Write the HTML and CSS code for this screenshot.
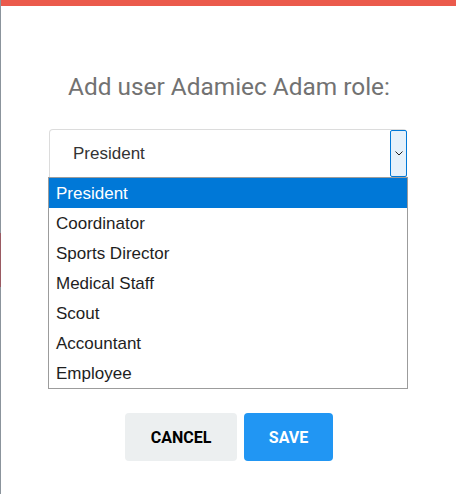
FILE: index.html
```html
<!DOCTYPE html>
<html>
<head>
<meta charset="utf-8">
<link rel="stylesheet" href="styles.css">
</head>
<body>
<div class="frame">
  <div class="side">
    <div class="side-grey"></div>
    <div class="side-red"></div>
    <div class="side-grey side-fill"></div>
  </div>
  <div class="main">
    <div class="topbar"></div>
    <div class="content">
      <h1 class="title">Add user Adamiec Adam role:</h1>
      <div class="picker">
        <div class="select">
          <span class="select-value">President</span>
          <span class="select-arrow">
            <svg width="8" height="5" viewBox="0 0 8 5"><path d="M0.5 0.5 L4 4 L7.5 0.5" fill="none" stroke="#222" stroke-width="1"/></svg>
          </span>
        </div>
        <ul class="options">
          <li class="option selected">President</li>
          <li class="option">Coordinator</li>
          <li class="option">Sports Director</li>
          <li class="option">Medical Staff</li>
          <li class="option">Scout</li>
          <li class="option">Accountant</li>
          <li class="option">Employee</li>
        </ul>
      </div>
      <div class="actions">
        <button class="btn btn-cancel">CANCEL</button>
        <button class="btn btn-save">SAVE</button>
      </div>
    </div>
  </div>
</div>
</body>
</html>
```

FILE: styles.css
```css
html, body {
  margin: 0;
  padding: 0;
  background: #fff;
}
.frame {
  display: flex;
  width: 456px;
  height: 494px;
  overflow: hidden;
}
.side {
  width: 1px;
  display: flex;
  flex-direction: column;
}
.side-grey {
  height: 233px;
  background: #8b949c;
}
.side-red {
  height: 54px;
  background: #9a5a62;
}
.side-fill {
  flex: 1;
}
.main {
  flex: 1;
  display: flex;
  flex-direction: column;
}
.topbar {
  height: 6px;
  background: #eb5a4c;
}
.content {
  display: flex;
  flex-direction: column;
  align-items: center;
}
.title {
  margin: 65px 0 0 1px;
  font-family: Roboto, sans-serif;
  font-weight: 400;
  font-size: 24.4px;
  line-height: 32px;
  color: #727272;
}
.picker {
  margin-top: 26px;
  margin-right: 1px;
  width: 360px;
  display: flex;
  flex-direction: column;
  align-items: center;
}
.select {
  box-sizing: border-box;
  width: 358px;
  height: 48px;
  border: 1px solid #dcdcdc;
  border-bottom: none;
  border-radius: 4px 4px 0 0;
  display: flex;
  align-items: stretch;
  justify-content: space-between;
}
.select-value {
  align-self: center;
  padding-left: 23px;
  padding-top: 1px;
  font-family: "Liberation Sans", Arial, sans-serif;
  font-size: 17px;
  color: #333;
}
.select-arrow {
  box-sizing: border-box;
  width: 17px;
  margin-right: -1px;
  border: 1px solid #0078d7;
  border-radius: 2px;
  background: #e5f1fb;
  display: flex;
  align-items: center;
  justify-content: center;
}
.options {
  list-style: none;
  margin: 0;
  padding: 0;
  width: 360px;
  box-sizing: border-box;
  border: 1px solid #9c9c9c;
}
.option {
  height: 30px;
  line-height: 32px;
  padding-left: 7px;
  font-family: "Liberation Sans", Arial, sans-serif;
  font-size: 17px;
  color: #1e1e1e;
}
.option.selected {
  background: #0078d7;
  color: #fff;
}
.actions {
  margin-top: 24px;
  margin-left: 1px;
  display: flex;
  gap: 7px;
}
.btn {
  height: 48px;
  border: none;
  border-radius: 4px;
  font-family: Roboto, sans-serif;
  font-weight: 700;
  font-size: 16px;
  padding: 0;
}
.btn-cancel {
  width: 112px;
  background: #eceff0;
  color: #000;
}
.btn-save {
  width: 89px;
  background: #2196f3;
  color: #fff;
}
```
